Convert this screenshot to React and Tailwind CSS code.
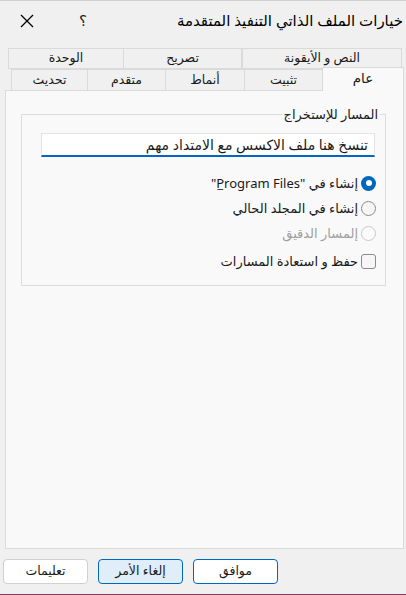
import React from 'react';

const TOP_TABS = [
  { label: 'النص و الأيقونة', w: 'w-[160px]' },
  { label: 'تصريح', w: 'w-[119px]' },
  { label: 'الوحدة', w: 'w-[116px]' },
];

const BOTTOM_TABS = [
  { label: 'تثبيت', w: 'w-[79px]' },
  { label: 'أنماط', w: 'w-[80px]' },
  { label: 'متقدم', w: 'w-[79px]' },
  { label: 'تحديث', w: 'w-[77px]' },
];

function Radio({ state }) {
  if (state === 'on') {
    return (
      <span className="w-[15px] h-[15px] rounded-full bg-[#0067c0] flex items-center justify-center shrink-0">
        <span className="w-[6px] h-[6px] rounded-full bg-white" />
      </span>
    );
  }
  if (state === 'disabled') {
    return <span className="w-[15px] h-[15px] rounded-full border border-[#c8c8c8] bg-[#fbfbfb] shrink-0" />;
  }
  return <span className="w-[15px] h-[15px] rounded-full border border-[#8a8a8a] bg-[#f6f6f6] shrink-0" />;
}

export default function App() {
  return (
    <div
      dir="rtl"
      className="w-[406px] h-[595px] bg-[#f0f0f0] border-t border-[#cfcfcf] border-b border-b-[#883b5b] flex flex-col text-[12.5px] text-[#1a1a1a] font-['Noto_Sans','DejaVu_Sans',sans-serif] overflow-hidden"
    >
      {/* Title bar */}
      <div className="h-[39px] flex items-center justify-between pr-[3px] pl-[4px]">
        <span className="text-[15px] leading-none text-black">خيارات الملف الذاتي التنفيذ المتقدمة</span>
        <div className="flex items-center gap-[10px]">
          <span className="w-[46px] flex justify-center text-[15px] leading-none">؟</span>
          <span className="w-[46px] flex justify-center">
            <svg width="14" height="14" viewBox="0 0 14 14">
              <path d="M1 1L13 13M13 1L1 13" stroke="#000" strokeWidth="1.3" />
            </svg>
          </span>
        </div>
      </div>

      {/* Tabs */}
      <div className="mt-[8px] mr-[4px] ml-[7px] flex">
        {TOP_TABS.map((t) => (
          <div
            key={t.label}
            className={`${t.w} h-[21px] border border-[#dadada] -ml-px first:ml-0 flex items-center justify-center leading-none`}
          >
            {t.label}
          </div>
        ))}
      </div>
      <div className="mr-[2px] ml-[7px] flex items-end h-[21px]">
        <div className="w-[82px] h-[24px] -mb-px relative z-10 bg-[#f9f9f9] border border-b-0 border-[#dadada] flex items-center justify-center text-[13.5px] leading-none pb-[2px]">
          عام
        </div>
        {BOTTOM_TABS.map((t) => (
          <div
            key={t.label}
            className={`${t.w} h-[21px] border border-b-0 border-[#dadada] -mr-px flex items-center justify-center leading-none`}
          >
            {t.label}
          </div>
        ))}
      </div>

      {/* Panel */}
      <div className="mr-[2px] w-[399px] h-[459px] bg-[#f9f9f9] border border-[#dadada] pt-[23px]">
        <div className="relative mr-[17px] w-[365px] h-[172px] border border-[#dcdcdc] pt-[18px] text-[13px]">
          <span className="absolute -top-[9px] right-[5px] px-[2px] bg-[#f9f9f9] leading-[16px]">
            المسار للإستخراج
          </span>
          <div className="mr-[10px] w-[334px] h-[24px] bg-white border border-[#e5e5e5] border-b-2 border-b-[#0067c0] flex items-center pr-[6px] text-[14px] leading-none">
            تنسخ هنا ملف الاكسس مع الامتداد مهم
          </div>

          <div className="mr-[9px] mt-[18px] flex flex-col gap-[9px]">
            <div className="flex items-center gap-[3px] h-[16px]">
              <Radio state="on" />
              <span className="leading-none">إنشاء في "P&#x332;rogram Files"</span>
            </div>
            <div className="flex items-center gap-[3px] h-[16px]">
              <Radio state="off" />
              <span className="leading-none">إنشاء في المجلد الحالي</span>
            </div>
            <div className="flex items-center gap-[3px] h-[16px]">
              <Radio state="disabled" />
              <span className="leading-none text-[#a0a0a0]">إلمسار الدقيق</span>
            </div>
            <div className="flex items-center gap-[3px] h-[16px] mt-[3px]">
              <span className="w-[15px] h-[15px] rounded-[3px] border border-[#8a8a8a] bg-[#f6f6f6] shrink-0" />
              <span className="leading-none">حفظ و استعادة المسارات</span>
            </div>
          </div>
        </div>
      </div>

      {/* Buttons */}
      <div className="mt-[10px] mr-[128px] flex gap-[10px]">
        <button className="w-[85px] h-[25px] rounded-[4px] bg-white border border-[#0067c0] leading-none">
          موافق
        </button>
        <button className="w-[85px] h-[25px] rounded-[4px] bg-[#e0eef9] border border-[#0067c0] leading-none">
          إلغاء الأمر
        </button>
        <button className="w-[85px] h-[25px] rounded-[4px] bg-white border border-[#d0d0d0] leading-none">
          تعليمات
        </button>
      </div>
    </div>
  );
}
